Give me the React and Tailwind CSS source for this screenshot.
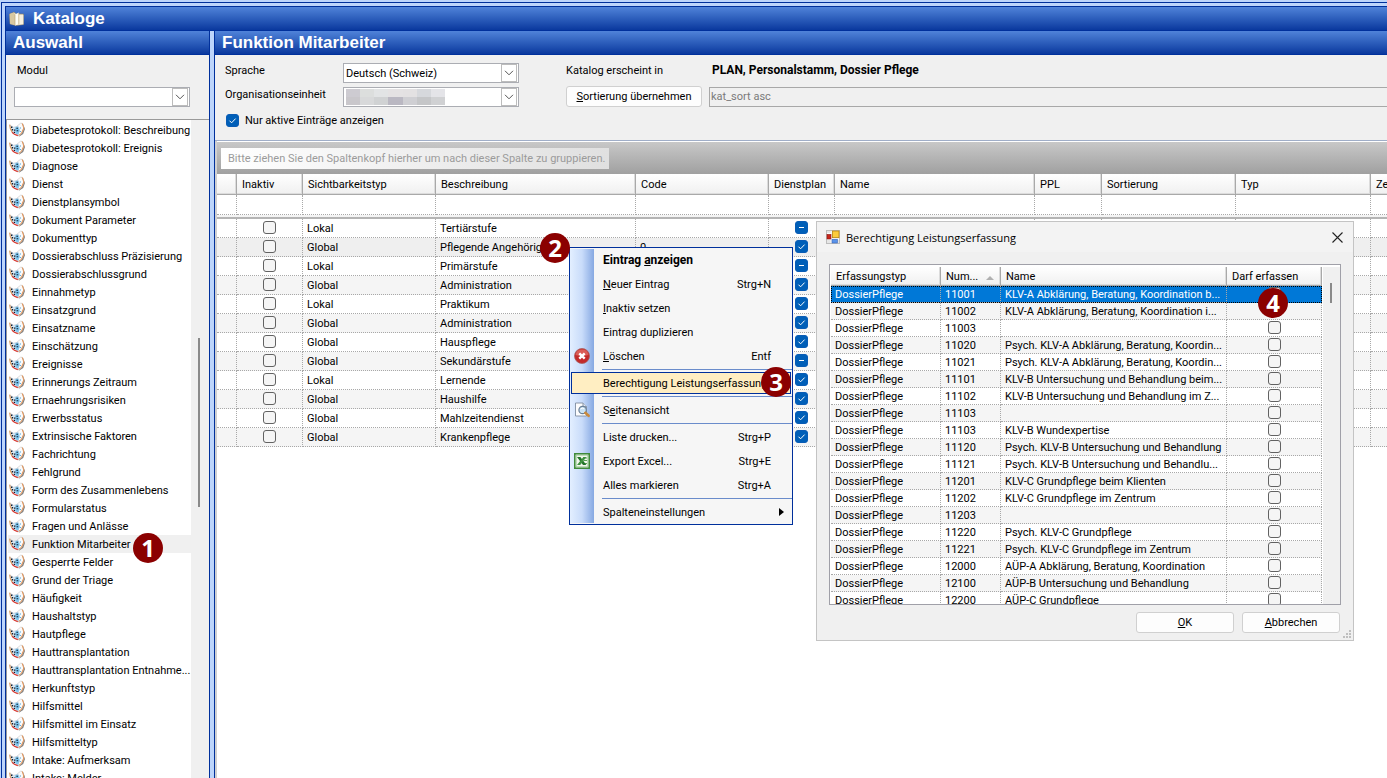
import React from 'react'
import { useState } from 'react'

const catalogs = [
  'Diabetesprotokoll: Beschreibung', 'Diabetesprotokoll: Ereignis', 'Diagnose', 'Dienst', 'Dienstplansymbol',
  'Dokument Parameter', 'Dokumenttyp', 'Dossierabschluss Präzisierung', 'Dossierabschlussgrund', 'Einnahmetyp',
  'Einsatzgrund', 'Einsatzname', 'Einschätzung', 'Ereignisse', 'Erinnerungs Zeitraum', 'Ernaehrungsrisiken',
  'Erwerbsstatus', 'Extrinsische Faktoren', 'Fachrichtung', 'Fehlgrund', 'Form des Zusammenlebens',
  'Formularstatus', 'Fragen und Anlässe', 'Funktion Mitarbeiter', 'Gesperrte Felder', 'Grund der Triage',
  'Häufigkeit', 'Haushaltstyp', 'Hautpflege', 'Hauttransplantation', 'Hauttransplantation Entnahme...',
  'Herkunftstyp', 'Hilfsmittel', 'Hilfsmittel im Einsatz', 'Hilfsmitteltyp', 'Intake: Aufmerksam', 'Intake: Melder',
]

const entries = [
  { scope: 'Lokal', name: 'Tertiärstufe', code: '', plan: 'minus', ppl: true },
  { scope: 'Global', name: 'Pflegende Angehörige', code: '0', plan: 'check' },
  { scope: 'Lokal', name: 'Primärstufe', code: '', plan: 'minus' },
  { scope: 'Global', name: 'Administration', code: '', plan: 'check' },
  { scope: 'Lokal', name: 'Praktikum', code: '', plan: 'check' },
  { scope: 'Global', name: 'Administration', code: '', plan: 'check' },
  { scope: 'Global', name: 'Hauspflege', code: '', plan: 'check' },
  { scope: 'Global', name: 'Sekundärstufe', code: '', plan: 'minus' },
  { scope: 'Lokal', name: 'Lernende', code: '', plan: 'check' },
  { scope: 'Global', name: 'Haushilfe', code: '', plan: 'check' },
  { scope: 'Global', name: 'Mahlzeitendienst', code: '', plan: 'check' },
  { scope: 'Global', name: 'Krankenpflege', code: '', plan: 'check' },
]

const services = [
  ['11001', 'KLV-A Abklärung, Beratung, Koordination b...'],
  ['11002', 'KLV-A Abklärung, Beratung, Koordination i...'],
  ['11003', ''],
  ['11020', 'Psych. KLV-A Abklärung, Beratung, Koordin...'],
  ['11021', 'Psych. KLV-A Abklärung, Beratung, Koordin...'],
  ['11101', 'KLV-B Untersuchung und Behandlung beim...'],
  ['11102', 'KLV-B Untersuchung und Behandlung im Z...'],
  ['11103', ''],
  ['11103', 'KLV-B Wundexpertise'],
  ['11120', 'Psych. KLV-B Untersuchung und Behandlung'],
  ['11121', 'Psych. KLV-B Untersuchung und Behandlu...'],
  ['11201', 'KLV-C Grundpflege beim Klienten'],
  ['11202', 'KLV-C Grundpflege im Zentrum'],
  ['11203', ''],
  ['11220', 'Psych. KLV-C Grundpflege'],
  ['11221', 'Psych. KLV-C Grundpflege im Zentrum'],
  ['12000', 'AÜP-A Abklärung, Beratung, Koordination'],
  ['12100', 'AÜP-B Untersuchung und Behandlung'],
  ['12200', 'AÜP-C Grundpflege'],
]

const BookIcon = () => (
  <svg className="size-4 shrink-0" viewBox="0 0 16 16" aria-hidden="true">
    <path d="M9.5 15 L14.2 12 L16 7 L14 1.8 L13 10z" fill="#808080" />
    <path d="M7.5 4.6 L11.6 1.2 L13.4 1.4 L15 6 L12.6 11.6 L9 13.8z" fill="#fafafa" stroke="#c4c4c4" strokeWidth=".6" />
    <path d="M13.2 1.4 L14.8 6 L12.4 11.4 L9.6 13.4" fill="none" stroke="#e58a45" strokeWidth=".9" />
    <path d="M.8 3 L4.4 5.2 L9 4.2 L10.4 8 L9 13.6 L3.4 11z" fill="#dbe8f2" stroke="#9fb1c2" strokeWidth=".4" />
    <path d="M6 5.4 L9 4.4 L10.6 8 L9.2 12.6 L6.6 11.4z" fill="#7cc6ef" />
    <path d="M.7 2.6 L1.3 6.6 L3 10" fill="none" stroke="#e39a58" strokeWidth="1.1" />
    <path d="M3 10.2 L5.4 12.2 L8.8 13.6" fill="none" stroke="#dc3a30" strokeWidth="1.2" />
    <path d="M2 4.6h1.4v1.4H2z M2.8 7h1.4v1.4H2.8z M5 7.4h1.4v1.4H5z M4.8 9.8h1.3v1.2H4.8z M7.4 5.8h1.6v1H7.4z M7.6 8.2h1.6v1H7.6z" fill="#0f1d30" />
    <path d="M10.8 5.4h1.2v1.2h-1.2z M10.8 9h1.1v1.1h-1.1z" fill="#4aa3dc" />
  </svg>
)

const FolderIcon = () => (
  <svg className="size-4 shrink-0" viewBox="0 0 16 16" aria-hidden="true">
    <path d="M.5 3 L5 1.2 L7.5 3 L14.5 3 L14.5 13.5 L7 14.5 L1 13z" fill="#f1e4c8" stroke="#8d8166" strokeWidth=".6" />
    <path d="M.8 3 L5 1.4 L6.5 4.5 L6.5 14.3 L1.2 12.8z" fill="#d9c8a0" />
    <path d="M6 3.5 L9.8 1.6 L9.8 13 L6 14.6z" fill="#fffdf5" />
    <path d="M9.8 4 L14.3 4 L14.3 13.2 L9.8 13.4z" fill="#f8f0de" />
    <path d="M6 3.5 V14 M9.8 2 V13.2" stroke="#bda878" strokeWidth=".7" />
  </svg>
)

const DeleteIcon = () => (
  <svg className="size-4" viewBox="0 0 16 16" aria-hidden="true">
    <circle cx="8" cy="8" r="7.5" fill="#c32a2a" stroke="#a86060" strokeWidth=".8" />
    <path d="M1.5 7 A6.6 6.6 0 0 1 14.5 7 Q8 9 1.5 7z" fill="#e4736b" opacity=".7" />
    <path d="M5.3 5.3 L10.7 10.7 M10.7 5.3 L5.3 10.7" stroke="#fff" strokeWidth="2.4" />
  </svg>
)

const PreviewIcon = () => (
  <svg className="size-4" viewBox="0 0 16 16" aria-hidden="true">
    <path d="M1.5 1 H9 L12.5 4.5 V14 H1.5z" fill="#fdfdfd" stroke="#7f8da0" strokeWidth=".9" />
    <path d="M9 1 V4.5 H12.5" fill="#dfe6ef" stroke="#7f8da0" strokeWidth=".9" />
    <circle cx="8.6" cy="8" r="3.7" fill="#cbe4f6" stroke="#6a7f96" strokeWidth="1.2" />
    <path d="M6.6 7 Q8 5.4 10 6.6" stroke="#fff" fill="none" />
    <path d="M11.3 10.8 L14.6 13.8" stroke="#c98a3d" strokeWidth="2.6" strokeLinecap="round" />
  </svg>
)

const ExcelIcon = () => (
  <svg className="size-4" viewBox="0 0 16 16" aria-hidden="true">
    <rect x=".8" y=".8" width="14.4" height="14.4" fill="#f2f7ef" stroke="#3f8a3b" strokeWidth="1.6" />
    <rect x="2.2" y="2.2" width="11.6" height="11.6" fill="none" stroke="#9dc898" strokeWidth=".8" />
    <path d="M9 5 H13 M10 7.5 H13 M9 10.5 H13" stroke="#5ba056" strokeWidth="1" />
    <path d="M3 4 H6.4 L12.4 12 H9z" fill="#23742a" />
    <path d="M9.4 4 H12.4 L6.2 12 H3z" fill="#3f9140" />
  </svg>
)

const FormIcon = () => (
  <svg className="size-3.5 shrink-0" viewBox="0 0 14 14" aria-hidden="true">
    <rect x=".5" y=".5" width="13" height="13" fill="#e6e6e6" stroke="#bdbdbd" />
    <path d="M5.2 1 V13 M1 9.2 H13 M1 3.6 H5" stroke="#fff" />
    <rect x="1" y="4.5" width="4" height="4.5" fill="#c8261c" stroke="#8d1410" strokeWidth=".6" />
    <rect x="6.4" y="1" width="6.6" height="6.6" fill="#fbcb3c" stroke="#b98612" strokeWidth=".8" />
    <rect x="6" y="9.3" width="5.4" height="3.7" fill="#5a93ea" stroke="#3a68b8" strokeWidth=".6" />
  </svg>
)

const Check = ({ state, label, id }) => (
  <span className="grid size-[13px] place-items-center">
    <input
      type="checkbox"
      id={id}
      aria-label={label}
      defaultChecked={state === 'check' || state === 'minus'}
      className="peer col-start-1 row-start-1 size-[13px] appearance-none rounded-[3px] border border-[#626262] bg-[#f5f5f5] checked:border-[#0a5cb5] checked:bg-[#005fb8]"
    />
    <svg className="pointer-events-none col-start-1 row-start-1 hidden size-[13px] peer-checked:block" viewBox="0 0 13 13" aria-hidden="true">
      <path d={state === 'minus' ? 'M4 6.5 H9' : 'M3.5 6.7 L5.6 8.8 L9.6 4.6'} fill="none" stroke="#fff" />
    </svg>
  </span>
)

const Dropdown = ({ id, value, children }) => (
  <div className="relative">
    <select id={id} className="block h-5 w-full appearance-none border border-[#abadb3] bg-white pl-0.5">
      <option>{value}</option>
    </select>
    <span className="pointer-events-none absolute inset-y-px right-0.5 grid w-4 place-items-center border border-[#bcbcbc] bg-white">
      <svg className="w-2.5" viewBox="0 0 10 6" aria-hidden="true">
        <path d="M1 .8 L5 4.8 L9 .8" fill="none" stroke="#555" />
      </svg>
    </span>
    {children}
  </div>
)

const Bar = ({ children }) => (
  <h2 className="flex h-6 shrink-0 items-center border-b border-[#00309c] bg-linear-to-b from-[#5083d9] to-[#0a389e] pl-[7px] font-['Liberation_Sans',Arial,sans-serif] text-[17px] leading-5 font-bold text-white">
    {children}
  </h2>
)

const Sidebar = () => {
  const [selected, setSelected] = useState('Funktion Mitarbeiter')
  return (
    <aside className="flex w-[204px] shrink-0 flex-col border-r border-[#00309c] bg-[#f0f0f0]">
      <Bar>Auswahl</Bar>
      <div className="flex h-16 shrink-0 flex-col gap-2 px-2 pt-2 pr-[19px]">
        <label htmlFor="modul" className="pl-[3px] leading-4">Modul</label>
        <Dropdown id="modul" value="" />
      </div>
      <div className="flex min-h-0 grow border-t border-l border-[#9a9a9a] bg-white">
        <ul className="min-w-0 grow overflow-hidden pt-px pl-px">
          {catalogs.map((name) => (
            <li key={name}>
              <button
                onClick={() => setSelected(name)}
                className={`flex h-[18px] w-full items-center gap-[7px] pl-px text-left whitespace-nowrap ${selected === name ? 'bg-[#f0f0f0]' : ''}`}
              >
                <BookIcon />
                <span>{name}</span>
              </button>
            </li>
          ))}
        </ul>
        <div className="w-[18px] shrink-0 bg-[#f0f0f0] pt-[218px] pl-[7px]">
          <div className="h-[169px] w-0.5 bg-[#8a8a8a]"></div>
        </div>
      </div>
    </aside>
  )
}

const mosaic = [
  '#cdcbd1', '#dcdedd', '#e2e4e5', '#e4e2e3', '#e3e1e2', '#d6d8dc', '#e4e4e8',
  '#c9c7cb', '#d8d9da', '#d0d2d3', '#bab8c2', '#cfcfd3', '#c5c6c8', '#d0d1d3',
]

const Filters = () => (
  <div className="flex h-[86px] shrink-0 border-b border-[#a0aec8] pt-2 pl-[10px]">
    <div className="w-[294px] shrink-0">
      <div className="grid grid-cols-[118px_176px] gap-y-1">
        <label htmlFor="sprache">Sprache</label>
        <Dropdown id="sprache" value="Deutsch (Schweiz)" />
        <label htmlFor="orga">Organisationseinheit</label>
        <Dropdown id="orga" value="">
          <div className="absolute top-0.5 left-[3px] grid w-[99px] grid-cols-7">
            {mosaic.map((color, i) => (
              <span key={i} className="h-2" style={{ background: color }}></span>
            ))}
          </div>
        </Dropdown>
      </div>
      <div className="flex items-center gap-1.5 pt-1.5 pl-px">
        <Check state="check" id="aktiv" />
        <label htmlFor="aktiv">Nur aktive Einträge anzeigen</label>
      </div>
    </div>
    <div className="ml-[47px] min-w-0 grow">
      <div className="flex h-[23px] items-start">
        <span className="w-[146px] shrink-0">Katalog erscheint in</span>
        <b className="text-[12px] leading-[15px] whitespace-nowrap">PLAN, Personalstamm, Dossier Pflege</b>
      </div>
      <div className="flex items-center gap-[7px]">
        <button className="h-[21px] w-[136px] shrink-0 rounded-[3px] border border-[#d0d0d0] bg-[#fdfdfd]">
          <u>S</u>ortierung übernehmen
        </button>
        <input aria-label="Sortierung" disabled defaultValue="kat_sort asc" className="h-5 min-w-0 grow border border-r-0 border-[#a8a8a8] bg-[#f0f0f0] px-px text-[#7a7a7a]" />
      </div>
    </div>
  </div>
)

const columns = ['', 'Inaktiv', 'Sichtbarkeitstyp', 'Beschreibung', 'Code', 'Dienstplan', 'Name', 'PPL', 'Sortierung', 'Typ', 'Zeit']
const grid = 'border-r border-b border-dotted border-[#a8a8a8]'
const cell = `${grid} pt-px pr-0 pb-0 pl-1`
const head = 'border-r border-b border-[#a9a9a9] bg-linear-to-b from-white to-[#f0f0f0] pt-px pr-0 pb-0 pl-[5px] text-left font-normal shadow-[inset_-1px_-1px_0_#dcdcdc]'

const CheckCell = ({ state, label, pad = 'pt-0.5' }) => (
  <td className={`${grid} p-0 align-top`}>
    <div className={`flex justify-center ${pad}`}><Check state={state} label={label} /></div>
  </td>
)

const EntryTable = () => (
  <table className="w-[1230px] table-fixed border-separate border-spacing-0 whitespace-nowrap">
    <colgroup>
      <col className="w-5" />
      <col className="w-[66px]" />
      <col className="w-[133px]" />
      <col className="w-[200px]" />
      <col className="w-[133px]" />
      <col className="w-[66px]" />
      <col className="w-[200px]" />
      <col className="w-[67px]" />
      <col className="w-[134px]" />
      <col className="w-[135px]" />
      <col />
    </colgroup>
    <thead>
      <tr className="h-[21px]">
        {columns.map((name) => <th key={name} className={head}>{name}</th>)}
      </tr>
      <tr className="h-5">
        {columns.map((name) => <td key={name} className={cell}></td>)}
      </tr>
      <tr className="h-1">
        <td colSpan={11} className="border-b-2 border-[#b4b4b4] bg-[#f4f4f4] p-0"></td>
      </tr>
    </thead>
    <tbody>
      {entries.map((entry, i) => (
        <tr key={i} className={`h-[19px] ${i === 1 ? 'bg-[#efefef]' : i % 2 ? 'bg-[#f5f5f5]' : 'bg-white'}`}>
          <td className={cell}></td>
          <CheckCell label={`${entry.name} inaktiv`} />
          <td className={cell}>{entry.scope}</td>
          <td className={cell}>{entry.name}</td>
          <td className={cell}>{entry.code}</td>
          <CheckCell state={entry.plan} label={`${entry.name} Dienstplan`} />
          <td className={cell}></td>
          <CheckCell state={entry.ppl ? 'minus' : ''} label={`${entry.name} PPL`} />
          <td className={cell}></td>
          <td className={cell}></td>
          <td className={cell}></td>
        </tr>
      ))}
    </tbody>
  </table>
)

const MenuItem = ({ icon, shortcut, active, bold, arrow, children }) => (
  <button
    role="menuitem"
    className={`flex items-center text-left ${active ? 'mx-px my-px h-[22px] border border-[#00309c] bg-[#ffeec2]' : 'h-6'} ${bold ? 'text-[12px] font-bold' : ''}`}
  >
    <span className={`shrink-0 ${active ? 'w-[31px]' : 'w-[33px] pl-1'}`}>{icon}</span>
    <span className="grow whitespace-nowrap">{children}</span>
    {shortcut && <span className="mr-[21px]">{shortcut}</span>}
    {arrow && (
      <svg className="mr-2 h-2 w-[5px]" viewBox="0 0 5 8" aria-hidden="true"><path d="M0 0 L5 4 L0 8z" fill="#000" /></svg>
    )}
  </button>
)

const Separator = () => <div className="my-px ml-8 h-px bg-[#6a8ccb]" role="separator"></div>

const ContextMenu = () => (
  <div role="menu" className="absolute top-[247px] left-[569px] w-[224px] border border-[#00309c] bg-[#f6f6f6]">
    <div className="absolute inset-y-px left-0 w-6 bg-linear-to-r from-[#e3efff] via-[#c9dcfa] to-[#87a9e2]"></div>
    <div className="relative flex flex-col">
      <MenuItem bold>Eintrag <u>a</u>nzeigen</MenuItem>
      <MenuItem shortcut="Strg+N"><u>N</u>euer Eintrag</MenuItem>
      <MenuItem><u>I</u>naktiv setzen</MenuItem>
      <MenuItem>Eintrag duplizieren</MenuItem>
      <MenuItem icon={<DeleteIcon />} shortcut="Entf"><u>L</u>öschen</MenuItem>
      <Separator />
      <MenuItem active>Berechtigung Leistungserfassung</MenuItem>
      <Separator />
      <MenuItem icon={<PreviewIcon />}>S<u>e</u>itenansicht</MenuItem>
      <Separator />
      <MenuItem shortcut="Strg+P">Liste drucken...</MenuItem>
      <MenuItem icon={<ExcelIcon />} shortcut="Strg+E">Export Excel...</MenuItem>
      <MenuItem shortcut="Strg+A">Alles markieren</MenuItem>
      <Separator />
      <MenuItem arrow>Spalteneinstellungen</MenuItem>
    </div>
  </div>
)

const PermissionDialog = () => (
  <div role="dialog" aria-label="Berechtigung Leistungserfassung" className="absolute top-[221px] left-[816px] w-[538px] border border-[#c4c4c4] bg-[#f0f0f0]">
    <div className="flex h-[30px] items-center gap-1.5 bg-[#f3f3f3] pr-2.5 pl-[9px]">
      <FormIcon />
      <span className="grow font-['Open_Sans',sans-serif]">Berechtigung Leistungserfassung</span>
      <button aria-label="Schliessen">
        <svg className="size-[11px]" viewBox="0 0 11 11" aria-hidden="true"><path d="M.5 .5 L10.5 10.5 M10.5 .5 L.5 10.5" stroke="#222" strokeWidth="1.1" /></svg>
      </button>
    </div>
    <div className="mx-3 mt-3 flex h-[341px] overflow-hidden border border-[#a0a0a8] bg-white pl-px">
      <table className="mt-0.5 h-fit w-[491px] shrink-0 table-fixed border-separate border-spacing-0 whitespace-nowrap">
        <colgroup>
          <col className="w-[110px]" />
          <col className="w-[60px]" />
          <col className="w-[226px]" />
          <col />
        </colgroup>
        <thead>
          <tr className="h-[19px]">
            <th className={head}>Erfassungstyp</th>
            <th className={head}>
              <span className="flex items-center gap-2">
                Num...
                <svg className="mt-0.5 h-1 w-2" viewBox="0 0 8 4" aria-hidden="true"><path d="M0 4 L4 0 L8 4z" fill="#b0b0b0" /></svg>
              </span>
            </th>
            <th className={head}>Name</th>
            <th className={head}>Darf erfassen</th>
          </tr>
        </thead>
        <tbody>
          {services.map(([number, name], i) => (
            <tr key={i} className={`h-[17px] ${i === 0 ? 'bg-[#0078d7] text-white outline-1 -outline-offset-1 outline-dotted outline-black' : i % 2 ? 'bg-[#f5f5f5]' : 'bg-white'}`}>
              <td className={cell}>DossierPflege</td>
              <td className={cell}>{number}</td>
              <td className={cell}>{name}</td>
              <CheckCell pad="pt-px" label={`${number} darf erfassen`} />
            </tr>
          ))}
        </tbody>
      </table>
      <div className="mt-0.5 ml-px grow bg-[#f0f0f0] pt-4 pl-[7px]">
        <div className="h-5 w-0.5 bg-[#8a8a8a]"></div>
      </div>
    </div>
    <div className="flex h-[35px] justify-end gap-2 pt-[7px] pr-[13px]">
      <button className="h-[21px] w-[98px] rounded-[3px] border border-[#d0d0d0] bg-[#fdfdfd]"><u>O</u>K</button>
      <button className="h-[21px] w-[98px] rounded-[3px] border border-[#d0d0d0] bg-[#fdfdfd]"><u>A</u>bbrechen</button>
    </div>
    <svg className="absolute right-0.5 bottom-0.5 size-2" viewBox="0 0 8 8" aria-hidden="true">
      <path d="M6 0h2v2H6z M3 3h2v2H3z M6 3h2v2H6z M0 6h2v2H0z M3 6h2v2H3z M6 6h2v2H6z" fill="#bfbfbf" />
    </svg>
  </div>
)

const Step = ({ className, children }) => (
  <span className={`absolute grid size-[30px] place-items-center rounded-full bg-[#8b0000] font-['Open_Sans',sans-serif] text-[24px] leading-none font-bold text-white ${className}`}>
    {children}
  </span>
)

const App = () => {
  return (
    <div className="relative flex h-screen flex-col overflow-hidden bg-[#bdd5fb] pt-0.5 pl-px font-[Roboto,Arial,sans-serif] text-[11px] leading-[15px] text-black">
      <div className="flex min-h-0 grow border-t border-l border-[#00309c] pt-[3px] pl-[3px]">
        <div className="flex min-w-0 grow flex-col border-t border-l border-[#00309c]">
          <h1 className="flex h-6 shrink-0 items-center gap-2 border-b border-[#00309c] bg-linear-to-b from-[#5083d9] to-[#0a389e] pl-[3px] font-['Liberation_Sans',Arial,sans-serif] text-[17px] leading-5 font-bold text-white">
            <FolderIcon />
            Kataloge
          </h1>
          <div className="flex min-h-0 grow">
            <Sidebar />
            <main className="ml-1 flex min-w-0 grow flex-col border-l border-[#00309c] bg-[#f0f0f0]">
              <Bar>Funktion Mitarbeiter</Bar>
              <Filters />
              <div className="min-h-0 grow overflow-hidden border-l-2 border-[#d0d0d0] bg-white">
                <div className="mt-px flex h-8 items-center bg-linear-to-b from-[#c8c8c8] to-[#a0a0a0] pl-1">
                  <span className="flex h-[21px] min-w-[382px] items-center bg-linear-to-r from-white to-[#e0e0e0] pr-1 pl-[7px] whitespace-nowrap text-[#9b9b9b]">
                    Bitte ziehen Sie den Spaltenkopf hierher um nach dieser Spalte zu gruppieren.
                  </span>
                </div>
                <EntryTable />
              </div>
            </main>
          </div>
        </div>
      </div>
      <ContextMenu />
      <PermissionDialog />
      <Step className="top-[533px] left-[133px]">1</Step>
      <Step className="top-[233px] left-[540px]">2</Step>
      <Step className="top-[367px] left-[761px]">3</Step>
      <Step className="top-[288px] left-[1258px]">4</Step>
    </div>
  )
}

export default App
